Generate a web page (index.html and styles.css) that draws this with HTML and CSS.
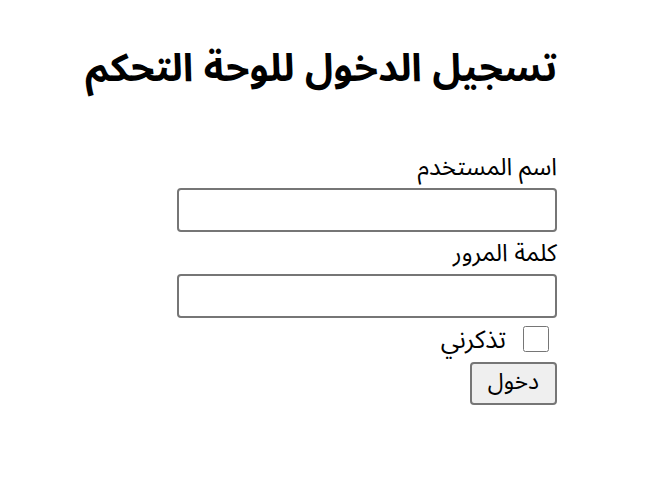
FILE: index.html
```html
<!DOCTYPE html>
<html lang="ar" dir="rtl">
<head>
  <meta charset="UTF-8">
  <meta name="viewport" content="width=device-width, initial-scale=1.0">
  <title>تسجيل الدخول</title>
  <link rel="stylesheet" href="styles.css">
</head>
<body>
  <div class="login">
    <h1>تسجيل الدخول للوحة التحكم</h1>
    <form>
      <label for="username">اسم المستخدم</label>
      <input type="text" id="username" name="username">
      <label for="password">كلمة المرور</label>
      <input type="password" id="password" name="password">
      <div class="remember">
        <input type="checkbox" id="remember" name="remember">
        <label for="remember">تذكرني</label>
      </div>
      <button type="submit">دخول</button>
    </form>
  </div>
</body>
</html>
```

FILE: styles.css
```css
body {
  margin: 0;
  font-family: "Liberation Sans", "Noto Sans Arabic", sans-serif;
  color: #000;
  background: #fff;
}

.login {
  width: 480px;
  margin: 0 95px 0 auto;
  padding-top: 40px;
}

h1 {
  margin: 0 0 50px;
  font-size: 38.5px;
  line-height: 56px;
  white-space: nowrap;
}

form label {
  display: block;
  font-size: 24px;
  line-height: 42px;
}

form input[type="text"],
form input[type="password"] {
  display: block;
  box-sizing: border-box;
  width: 380px;
  height: 44px;
  margin: 0;
  border: 2px solid #767676;
  border-radius: 4px;
  font-size: 22px;
}

.remember {
  display: flex;
  align-items: center;
  gap: 17px;
  margin-top: 8px;
}

.remember input {
  width: 26px;
  height: 26px;
  margin: 0;
  margin-inline-start: 8px;
}

.remember label {
  font-size: 25px;
  line-height: 26px;
}

button {
  margin-top: 10px;
  height: 43px;
  padding: 0 16px 5px;
  font-family: inherit;
  font-size: 23px;
  line-height: 30px;
  background: #efefef;
  border: 2px solid #767676;
  border-radius: 4px;
}
```
